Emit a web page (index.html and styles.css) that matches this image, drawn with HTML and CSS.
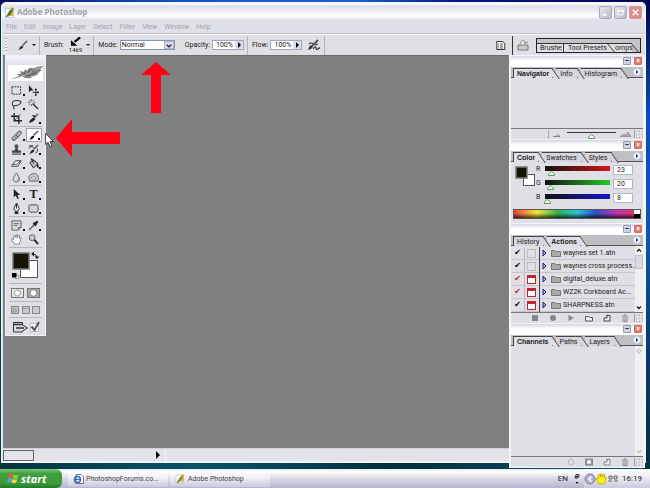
FILE: index.html
```html
<!DOCTYPE html>
<html lang="en">
<head>
  <meta charset="UTF-8" />
  <meta name="viewport" content="width=device-width, initial-scale=1.0" />
  <title>Adobe Photoshop</title>
  <link rel="stylesheet" href="styles.css">
</head>
<body>
  <div class="desktop">
    <main class="window">
      <!-- Title bar -->
      <header class="titlebar">
        <svg class="app-icon" viewBox="0 0 10 11"><rect x="0.5" y="1.5" width="8" height="9" fill="#fff" stroke="#9db4d6" stroke-width=".6"/><path d="M1 10 Q3 4 8 0 Q10 3 7 7 Q5 10 1 10" fill="#b4a52c"/><path d="M3 9 Q4 4 8 1 L6 7Z" fill="#3c7a35"/><path d="M5 9 L9 5 L8 9Z" fill="#e9b230"/><path d="M1 10 L6 4" stroke="#2c5068" stroke-width=".7"/></svg>
        <h1>Adobe Photoshop</h1>
        <div class="caption-buttons">
          <button class="caption" aria-label="Minimize"><svg viewBox="0 0 12 12"><path d="M3 8.5h4" stroke="#fff" stroke-width="2"/></svg></button>
          <button class="caption" aria-label="Maximize"><svg viewBox="0 0 12 12"><path d="M3 3.5h6v5H3zM3 4.5h6" fill="none" stroke="#fff"/></svg></button>
          <button class="caption close" aria-label="Close"><svg viewBox="0 0 12 12"><path d="M3 3l6 6M9 3l-6 6" stroke="#fff" stroke-width="1.5"/></svg></button>
        </div>
      </header>

      <nav class="menubar">
        <button>File</button><button>Edit</button><button>Image</button><button>Layer</button><button>Select</button><button>Filter</button><button>View</button><button>Window</button><button>Help</button>
      </nav>

      <!-- Options bar -->
      <div class="options">
        <span class="grip"></span>
        <button class="opt-tool" aria-label="Brush tool">
          <svg class="icon" viewBox="0 0 12 12"><path d="M11 1L6 6" stroke="#666" stroke-width="1.8"/><path d="M1 11Q3 10 3 8Q5 5 7 7Q6 10 1 11" fill="#333"/></svg>
          <i class="caret"></i>
        </button>
        <span class="divider"></span>
        <span class="opt-label">Brush:</span>
        <button class="brush-pick">
          <span class="brush-preview">
            <svg viewBox="0 0 12 9"><path d="M11 0L5 5" stroke="#000" stroke-width="2.4"/><path d="M1 3V9H8Z"/></svg>
            <span>1469</span>
          </span>
          <i class="caret"></i>
        </button>
        <span class="divider"></span>
        <label class="opt-label" for="mode">Mode:</label>
        <span class="select-box">
          <select id="mode"><option>Normal</option><option>Dissolve</option></select>
          <i class="select-arrow"><svg viewBox="0 0 9 8"><path d="M2 3l2.5 2.5L7 3" fill="none" stroke="#222" stroke-width="1.5"/></svg></i>
        </span>
        <label class="opt-label opacity" for="opacity">Opacity:</label>
        <span class="amount"><input id="opacity" value="100%"><button aria-label="Opacity slider"><svg viewBox="0 0 8 8"><path d="M3 1v6l3-3z"/></svg></button></span>
        <span class="divider"></span>
        <label class="opt-label" for="flow">Flow:</label>
        <span class="amount"><input id="flow" value="100%"><button aria-label="Flow slider"><svg viewBox="0 0 8 8"><path d="M3 1v6l3-3z"/></svg></button></span>
        <button class="airbrush" aria-label="Airbrush"><svg viewBox="0 0 14 12"><path d="M11 1L5 7" stroke="#555" stroke-width="2"/><path d="M1 11Q2 7 4 6l2 2Q4 11 1 11" fill="#333"/><path d="M2 5Q4 3 6 5M6 10Q9 6 9 9T13 8.500M8 6l3-1" fill="none" stroke="#333" stroke-width="1.1"/></svg></button>
        <span class="divider"></span>
        <span class="spacer"></span>
        <button class="opt-icon" aria-label="Toggle palettes"><svg viewBox="0 0 10 11"><path d="M.8 1.5h6l2 2v6h-8z" fill="#f5f5f5" stroke="#333"/><path d="M2 4h1M4 4h3M2 6h1M4 6h3M2 8h1M4 8h3" stroke="#333" stroke-width=".8"/></svg></button>
        <span class="divider dark"></span>
        <button class="opt-icon browser" aria-label="File browser"><svg viewBox="0 0 12 12"><path d="M1 6h10v5H1z" fill="#c9c9c9" stroke="#777"/><path d="M4 6Q3 2 6 1L8 3 7 6M8 4l3-1" fill="#eee" stroke="#777" stroke-width=".8"/></svg></button>
        <div class="well">
          <button class="well-tab">Brushe</button><button class="well-tab front">Tool Presets</button><button class="well-tab slant">omps</button>
        </div>
      </div>

      <div class="canvas"></div>

      <footer class="statusbar">
        <span class="zoom-level"></span>
        <button class="status-menu" aria-label="Status menu"><svg viewBox="0 0 6 8"><path d="M1 0v8l4-4z"/></svg></button>
        <span class="status-track"></span>
      </footer>
    </main>

    <!-- Toolbox -->
    <aside class="toolbox">
      <div class="toolbox-bar"></div>
      <div class="feather">
        <svg viewBox="0 0 36 15"><path d="M3 14Q9 12 11 11L9 9 13 9 12 6 16 7 17 4 19 6Q21 2 25 3L25 4Q29 1 35 1L32 5 34 5 29 9 31 9 26 11 22 12 24 13Q17 14 14 11 9 14 3 14" fill="#808080"/><path d="M4 14Q14 12 21 8T33 2" fill="none" stroke="#c8c8c8" stroke-width=".8"/><path d="M16 10l1-3M20 8l2-4M24 7l3-3M18 11l5-1M23 9l5-1" stroke="#555" stroke-width=".8"/></svg>
      </div>
      <div class="tools">
        <button aria-label="Marquee"><svg viewBox="0 0 12 12"><rect x="1" y="2" width="9.5" height="8" fill="none" stroke="#222" stroke-dasharray="2 1"/></svg></button>
        <button class="single" aria-label="Move"><svg viewBox="0 0 12 12"><path d="M1 0v8l2-2h3z" fill="#222"/><path d="M8.500 4.500v7M5 8h7" stroke="#222"/><path d="M7 5.500l1.500-2 1.500 2zM7 10.500l1.500 1.500 1.500-1.500zM10.500 6.500l1.500 1.500-1.500 1.500z"/></svg></button>
        <button aria-label="Lasso"><svg viewBox="0 0 12 12"><path d="M2 7Q0 3 4 2T11 3Q11 6 6 7T2 7Q4 8 3 9T4 11" fill="none" stroke="#333" stroke-width="1.1"/></svg></button>
        <button class="single" aria-label="Magic wand"><svg viewBox="0 0 12 12"><path d="M5 5l6 6" stroke="#333" stroke-width="1.6"/><path d="M4 0v2.500M4 5.500v2M0 4h2.500M1 1l2 2M7 1L5.500 2.500M1 7l1.500-1.500M6 4h2" stroke="#444" stroke-width=".9"/></svg></button>
        <button class="single" aria-label="Crop"><svg viewBox="0 0 12 12"><path d="M3.500 0v8.500H12M0 3.500h8.500V12" fill="none" stroke="#222" stroke-width="1.5"/><path d="M10.500 1L3 9" stroke="#333" stroke-width=".8"/></svg></button>
        <button aria-label="Slice"><svg viewBox="0 0 12 12"><path d="M11 1L6 6" stroke="#777" stroke-width="2"/><path d="M1 11Q2 7 6 5l2 2Q5 10 1 11M8 5L4 3 7 2" fill="#222"/></svg></button>
      </div>
      <div class="tools">
        <button aria-label="Healing brush"><svg viewBox="0 0 12 12"><path d="M3 9.500L9.500 3" stroke="#555" stroke-width="4.500" stroke-linecap="round"/><path d="M3 9.500L9.500 3" stroke="#b5b5b5" stroke-width="2.800" stroke-linecap="round"/><path d="M5 5l3 3M4.500 8h.5M7 4.500h.5" stroke="#444"/></svg></button>
        <button class="selected" aria-label="Brush"><svg viewBox="0 0 12 12"><path d="M11 1L6 6" stroke="#555" stroke-width="1.600"/><path d="M1 11Q3 10 3 8Q5 5 7 7Q6 10 1 11" fill="#111"/></svg></button>
        <button aria-label="Clone stamp"><svg viewBox="0 0 12 12"><circle cx="6" cy="2.500" r="2.200" fill="#555"/><path d="M5 4h2l1 3h3v2.500H1V7h3z" fill="#444"/><path d="M1 11h10" stroke="#222"/></svg></button>
        <button aria-label="History brush"><svg viewBox="0 0 12 12"><path d="M11 1L6 6" stroke="#555" stroke-width="1.600"/><path d="M1 11Q3 10 3 8Q5 5 7 7Q6 10 1 11" fill="#222"/><path d="M1 2h5M1 5Q3 1 6 4M8 10Q12 8 10 5" fill="none" stroke="#333"/></svg></button>
        <button aria-label="Eraser"><svg viewBox="0 0 12 12"><path d="M1 8l4-5h6L7.500 9H1z" fill="#f4f4f4" stroke="#333"/><path d="M1.500 7h5L10 3" fill="none" stroke="#333" stroke-width=".8"/></svg></button>
        <button aria-label="Paint bucket"><svg viewBox="0 0 12 12"><path d="M2 5l4-3 5 4-5 5z" fill="#bbb" stroke="#222"/><path d="M3 1q3-1 3 5M10 6q2 2 1 5-2-2-1-5" fill="#222" stroke="#222" stroke-width=".6"/></svg></button>
        <button aria-label="Blur"><svg viewBox="0 0 12 12"><path d="M6 1Q2 6 2.500 8.500 3.500 11 6 11T9.500 8.500Q9.500 6 6 1" fill="#ddd" stroke="#555" stroke-width=".9"/><path d="M8 6q1 3-2 4" fill="none" stroke="#888"/></svg></button>
        <button aria-label="Sponge"><svg viewBox="0 0 12 12"><path d="M1 8Q0 3 5 2t6 3 0 5H2z" fill="#ccc" stroke="#666"/><path d="M3 8q0-3 3-3t2 3q-2 1-3-1" fill="#eee" stroke="#777" stroke-width=".8"/></svg></button>
      </div>
      <div class="tools">
        <button aria-label="Path selection"><svg viewBox="0 0 12 12"><path d="M3 0v9l2.200-2L7 11l1.500-.7L7 6.500h3z" fill="#222"/></svg></button>
        <button aria-label="Type"><span class="type-glyph">T</span></button>
        <button aria-label="Pen"><svg viewBox="0 0 12 12"><path d="M6 0L3 6l1.500 3h3L9 6z" fill="#eee" stroke="#222"/><path d="M6 1v5" stroke="#222"/><path d="M4 9.500h4V12H4z" fill="#222"/></svg></button>
        <button aria-label="Shape"><svg viewBox="0 0 12 12"><rect x="1" y="2" width="10" height="8" rx="2" fill="#d5d5d5" stroke="#444"/></svg></button>
      </div>
      <div class="tools">
        <button aria-label="Notes"><svg viewBox="0 0 12 12"><path d="M1 1h10v7l-3 3H1z" fill="#ddd" stroke="#555"/><path d="M3 4h6M3 6h4M8 11V8h3" fill="none" stroke="#555" stroke-width=".9"/></svg></button>
        <button aria-label="Eyedropper"><svg viewBox="0 0 12 12"><path d="M7.500 4.500L2 10 1 11" stroke="#666" stroke-width="1.600"/><path d="M6 3l3 3M8 4l2.500-2.500" stroke="#222" stroke-width="2.600"/></svg></button>
        <button class="single" aria-label="Hand"><svg viewBox="0 0 12 12"><path d="M4 11L1 7 1 5l2 1V2l1.500-.5L5.500 4V1H7v3l1-2.500 1.500.5L9 5l1.500-1 .5 1-2 6z" fill="#fff" stroke="#666" stroke-width=".8"/></svg></button>
        <button class="single" aria-label="Zoom"><svg viewBox="0 0 12 12"><circle cx="4.500" cy="4" r="3.200" fill="#ccc" stroke="#555"/><path d="M7 6.500l4 4.500" stroke="#222" stroke-width="2"/></svg></button>
      </div>
      <div class="colors">
        <svg viewBox="0 0 34 30"><rect x="11.500" y="9.500" width="17" height="17" fill="#fff" stroke="#555"/><rect x="4" y="2" width="16" height="16" fill="#161405" stroke="#777" stroke-width="1.500"/><rect x="6.500" y="24.500" width="3" height="3" fill="#fff" stroke="#888" stroke-width=".8"/><rect x="3" y="22" width="4.500" height="4.500"/><path d="M24 3q4 0 4 4" fill="none" stroke="#222"/><path d="M25 .5v5L22 3zM25.500 5.500h5L28 8z" fill="#222"/></svg>
      </div>
      <div class="modes">
        <button aria-label="Standard mode"><svg viewBox="0 0 13 10"><rect x=".5" y=".5" width="12" height="9" fill="#e4e4e4" stroke="#777"/><circle cx="6.500" cy="5" r="3" fill="#fff" stroke="#888" stroke-width=".8"/></svg></button>
        <button aria-label="Quick mask"><svg viewBox="0 0 13 10"><rect x=".5" y=".5" width="12" height="9" fill="#a8a8a8" stroke="#777"/><circle cx="6.500" cy="5" r="3.300" fill="#fff" stroke="#777" stroke-width=".8"/></svg></button>
      </div>
      <div class="modes screens">
        <button aria-label="Standard screen"><svg viewBox="0 0 8 8"><rect x=".5" y=".5" width="7" height="7" fill="#c4c4c4" stroke="#888"/><path d="M2 3h3v3H2z" fill="none" stroke="#888" stroke-width=".8"/></svg></button>
        <button aria-label="Full screen with menu"><svg viewBox="0 0 8 8"><rect x=".5" y=".5" width="7" height="7" fill="#ccc" stroke="#888"/><path d="M1 2.500h6" stroke="#999"/></svg></button>
        <button aria-label="Full screen"><svg viewBox="0 0 8 8"><rect x=".5" y=".5" width="7" height="7" fill="#ccc" stroke="#888"/></svg></button>
      </div>
      <div class="modes jump">
        <button aria-label="Jump to ImageReady"><svg viewBox="0 0 28 12"><path d="M1.500 1.500h9V4l5 3-5 3v1h-9z" fill="#ddd" stroke="#333"/><path d="M1 3.500h9M4 7h8" stroke="#333" stroke-width="1.400"/><rect x="18.500" y="2.500" width="8" height="8" fill="#fff" stroke="#bbb"/><path d="M19.500 5.500l3 3.500L27 1" fill="none" stroke="#555" stroke-width="2"/></svg></button>
      </div>
    </aside>

    <!-- Palettes -->
    <aside class="palettes">
      <section class="palette navigator">
        <div class="palette-bar"><button class="mini" aria-label="Minimize">–</button><button class="mini close" aria-label="Close">×</button></div>
        <div class="tabs">
          <button class="tab active">Navigator</button><button class="tab">Info</button><button class="tab">Histogram</button>
          <button class="flyout" aria-label="Palette menu"></button>
        </div>
        <div class="palette-body"></div>
        <div class="palette-foot nav-foot">
          <span class="nav-percent"></span>
          <svg class="hill" viewBox="0 0 8 5"><path d="M0 4.500h7L5 2.500 3.500 4" fill="none" stroke="#888"/></svg>
          <input class="nav-slider" type="range" value="50" aria-label="Zoom">
          <svg class="hill big" viewBox="0 0 12 6"><path d="M0 5.500L4 3l2 1 2-3 3 4.500z" fill="#aaa" stroke="#888" stroke-width=".7"/></svg>
          <span class="resize"></span>
        </div>
      </section>

      <section class="palette color">
        <div class="palette-bar"><button class="mini" aria-label="Minimize">–</button><button class="mini close" aria-label="Close">×</button></div>
        <div class="tabs">
          <button class="tab active">Color</button><button class="tab">Swatches</button><button class="tab">Styles</button>
          <button class="flyout" aria-label="Palette menu"></button>
        </div>
        <div class="color-body">
          <svg class="swatch" viewBox="0 0 20 20"><rect x="8.500" y="8.500" width="11" height="11" fill="#fff" stroke="#555"/><rect x="1" y="1" width="11" height="11" fill="#161405" stroke="#777" stroke-width="1.500"/></svg>
          <div class="channels">
            <label for="red">R</label><input id="red" class="channel red" type="range" max="255" value="23"><input class="value" value="23" aria-label="Red value">
            <label for="green">G</label><input id="green" class="channel green" type="range" max="255" value="20"><input class="value" value="20" aria-label="Green value">
            <label for="blue">B</label><input id="blue" class="channel blue" type="range" max="255" value="8"><input class="value" value="8" aria-label="Blue value">
          </div>
        </div>
        <div class="ramp"><span class="ramp-ends"></span></div>
      </section>

      <section class="palette actions">
        <div class="palette-bar"><button class="mini" aria-label="Minimize">–</button><button class="mini close" aria-label="Close">×</button></div>
        <div class="tabs">
          <button class="tab">History</button><button class="tab active">Actions</button>
          <button class="flyout" aria-label="Palette menu"></button>
        </div>
        <div class="actions-body">
          <ul class="action-list">
            <li><input type="checkbox" id="a1" checked><span class="dialog"></span><i class="expand"></i><i class="folder"></i><label for="a1">waynes set 1.atn</label></li>
            <li><input type="checkbox" id="a2" checked><span class="dialog"></span><i class="expand"></i><i class="folder"></i><label for="a2">waynes cross process...</label></li>
            <li class="partial"><input type="checkbox" id="a3" checked><span class="dialog"></span><i class="expand"></i><i class="folder"></i><label for="a3">digital_deluxe.atn</label></li>
            <li class="partial"><input type="checkbox" id="a4" checked><span class="dialog"></span><i class="expand"></i><i class="folder"></i><label for="a4">WZ2K Corkboard Ac...</label></li>
            <li class="mixed"><input type="checkbox" id="a5" checked><span class="dialog"></span><i class="expand"></i><i class="folder"></i><label for="a5">SHARPNESS.atn</label></li>
          </ul>
          <div class="scroll">
            <svg viewBox="0 0 8 8"><path d="M2 5l2-2 2 2" fill="none" stroke="#222" stroke-width="1.400"/></svg>
            <span class="thumb"></span>
            <svg class="down" viewBox="0 0 8 8"><path d="M2 3l2 2 2-2" fill="none" stroke="#222" stroke-width="1.400"/></svg>
          </div>
        </div>
        <div class="palette-foot icons">
          <svg viewBox="0 0 8 8"><rect x="1" y="1" width="6" height="6" fill="#888"/></svg>
          <svg viewBox="0 0 8 8"><circle cx="4" cy="4" r="3" fill="#888"/></svg>
          <svg viewBox="0 0 8 8"><path d="M1.500 1v6L7 4z" fill="#888"/></svg>
          <svg viewBox="0 0 8 8"><path d="M.5 2.500h3l1 1h3v3.500h-7z" fill="#eee" stroke="#555"/></svg>
          <svg viewBox="0 0 8 8"><path d="M3 1.500h4v5.500H1V4h3V2" fill="#eee" stroke="#444"/></svg>
          <svg viewBox="0 0 8 8"><path d="M1 2h6M3 1h2M2 3v4.500h4V3M4 3v4" fill="none" stroke="#888"/></svg>
          <span class="resize"></span>
        </div>
      </section>

      <section class="palette channels-palette">
        <div class="palette-bar"><button class="mini" aria-label="Minimize">–</button><button class="mini close" aria-label="Close">×</button></div>
        <div class="tabs">
          <button class="tab active">Channels</button><button class="tab">Paths</button><button class="tab">Layers</button>
          <button class="flyout" aria-label="Palette menu"></button>
        </div>
        <div class="palette-body">
          <div class="scroll disabled">
            <svg viewBox="0 0 8 8"><path d="M1.500 4.500L4 2l2.500 2.500H5v2H3v-2z" fill="none" stroke="#c4c3b8"/></svg>
            <svg class="down" viewBox="0 0 8 8"><path d="M2 3l2 2 2-2" fill="none" stroke="#c4c3b8" stroke-width="1.400"/></svg>
          </div>
        </div>
        <div class="palette-foot icons">
          <svg viewBox="0 0 8 8"><circle cx="4" cy="4" r="2.800" fill="none" stroke="#bbb"/></svg>
          <svg viewBox="0 0 8 8"><rect x=".5" y="1" width="7" height="6" fill="#999" stroke="#888"/><circle cx="4" cy="4" r="2" fill="#fff"/></svg>
          <svg viewBox="0 0 8 8"><path d="M3 1.500h4v5.500H1V4h3V2" fill="#eee" stroke="#888"/></svg>
          <svg viewBox="0 0 8 8"><path d="M1 2h6M3 1h2M2 3v4.500h4V3M4 3v4" fill="none" stroke="#888"/></svg>
          <span class="resize"></span>
        </div>
      </section>
    </aside>

    <!-- Pointers drawn over the workspace -->
    <svg class="arrow-up" viewBox="0 0 30 51"><path d="M15 0L30 13H20V51H10V13H0Z" fill="#ff0014"/></svg>
    <svg class="arrow-left" viewBox="0 0 64 38"><path d="M0 19L16 0V13H64V25H16V38Z" fill="#ff0014"/></svg>
    <svg class="cursor" viewBox="0 0 9 15"><path d="M.5.5v11L3 9.200l2 4.800 2-.9-2-4.600h3.500z" fill="#fff" stroke="#222" stroke-width=".8"/></svg>
  </div>

  <!-- Taskbar -->
  <footer class="taskbar">
    <button class="start">
      <svg viewBox="0 0 12 11"><path d="M2 1Q4 0 6 1.500L5 5Q3 4 1 4.500z" fill="#f0562a"/><path d="M6.500 1.500Q9 3 11.500 1.500L10.500 5Q8 6 5.800 5z" fill="#8fd43c"/><path d="M1 5.500Q3 4.500 5 6L4 9.500Q2 8.500 0 9z" fill="#5b9bf0"/><path d="M5.500 6Q8 7 10.300 6L9.300 9.500Q7 10.500 4.600 9.500z" fill="#ffd23c"/></svg>
      start
    </button>
    <button class="task">
      <svg viewBox="0 0 11 10"><path d="M3 .5h5l2.500 2.500v6.500H3z" fill="#fff" stroke="#555" stroke-width=".8"/><circle cx="4.500" cy="5.500" r="3" fill="none" stroke="#2a6fd0" stroke-width="1.600"/><path d="M2 5.500h5" stroke="#2a6fd0" stroke-width="1.300"/></svg>
      PhotoshopForums.co...
    </button>
    <button class="task">
      <svg viewBox="0 0 11 10"><path d="M1 1h7v8H1z" fill="#fff" stroke="#9db4d6" stroke-width=".6"/><path d="M2 9Q3 4 8 0 10 3 7 6 5 9 2 9" fill="#b4a52c"/><path d="M5 8l4-4 0 3z" fill="#e9b230"/><path d="M2 9l5-6" stroke="#2c5068" stroke-width=".8"/></svg>
      Adobe Photoshop
    </button>
    <span class="spacer"></span>
    <span class="lang">EN</span>
    <svg class="lang-icon" viewBox="0 0 6 12"><path d="M2 1.500h3v2H2zM1 3.500h3v1.500H1z" fill="none" stroke="#222" stroke-width=".9"/><path d="M1.500 9h3L3 11z"/></svg>
    <div class="tray">
      <svg class="tray-chevron" viewBox="0 0 12 12"><circle cx="6" cy="6" r="5" fill="#b4b7cb" stroke="#77798c"/><path d="M7.500 3.500L5 6l2.500 2.500" fill="none" stroke="#fff" stroke-width="1.400"/></svg>
      <svg class="tray-hand" viewBox="0 0 11 12"><path d="M3 11L0 6l1-1 1 1V2l1.500-.5L4.500 4V1H6v3l1.500-3L9 2 8 5l2-1 .5 1L8.500 11z" fill="#ffee10" stroke="#a09000" stroke-width=".6"/></svg>
      <svg class="tray-faces" viewBox="0 0 10 8"><path d="M1 1h3v3H1zM6 1h3v3H6zM0 6h4M6 6h4" fill="#ddd" stroke="#555" stroke-width=".9"/></svg>
      <time>16:19</time>
    </div>
  </footer>
</body>
</html>
```
FILE: styles.css
```css
* {
  box-sizing: border-box;
}
body {
  margin: 0;
  height: 100vh;
  display: flex;
  flex-direction: column;
  overflow: hidden;
  font-family: Roboto, "Noto Sans", sans-serif;
  font-size: 7px;
  line-height: 10px;
  color: #222;
}
button, input, select {
  font: inherit;
  color: inherit;
  margin: 0;
  padding: 0;
  border: 0;
  background: none;
  border-radius: 0;
}
svg {
  display: block;
  flex: none;
}
.spacer {
  flex: 1;
}

/* Desktop and main window */
.desktop {
  flex: 1;
  min-height: 0;
  position: relative;
  display: flex;
  padding: 2px 4px 6px 1px;
  background:
    linear-gradient(90deg, #020a60, #0a2f9c 12%, #1258c8 30%, #1a60d0 55%, #06178a 70%, #020350) top / 100% 4px no-repeat,
    linear-gradient(#020350, #0a4fb5 25%, #0b57b5 50%, #063a70 75%, #03303f) right / 8px 100% no-repeat,
    linear-gradient(90deg, #05333f, #06566a 30%, #04303f 60%, #0a5568);
}
.window {
  flex: 1;
  display: flex;
  flex-direction: column;
  background: #e0dfe6;
  border: 1px solid #f6f6fa;
  border-bottom-width: 2px;
  border-radius: 5px 5px 0 0;
}
.titlebar {
  display: flex;
  align-items: center;
  height: 17px;
  padding: 1px 3px 0 3px;
  border-radius: 5px 5px 0 0;
  background: linear-gradient(#fff, #dedee8 20%, #f2f2f7 55%, #fff 75%, #dfdfe8);
}
.app-icon {
  width: 10px;
  height: 11px;
}
.titlebar h1 {
  margin: 0 0 0 2px;
  font: bold 8px/12px "Noto Sans", sans-serif;
  color: #a2a2a8;
}
.caption-buttons {
  display: flex;
  gap: 2px;
  margin-left: auto;
}
.caption {
  width: 13px;
  height: 13px;
  border: 1px solid #a9aab8;
  border-radius: 2px;
  background: linear-gradient(135deg, #e4e4ec, #b9bac8);
}
.caption.close {
  border-color: #cf9ea0;
  background: #dd8d8d;
}
.menubar {
  display: flex;
  gap: 7px;
  height: 14px;
  padding: 0 4px;
  border-bottom: 1px solid #c4c4ce;
  background: #dfe0e8;
  color: #a5a5a9;
}

/* Options bar */
.options {
  display: flex;
  align-items: center;
  height: 21px;
  padding: 0 4px 0 3px;
  border-top: 1px solid #f8f8fa;
  background: #e0dfe4;
  white-space: nowrap;
}
.grip {
  width: 2px;
  height: 15px;
  background: repeating-linear-gradient(#b0b0b6 0 1px, #f2f2f2 1px 3px);
}
.opt-tool {
  display: flex;
  align-items: center;
  gap: 4px;
  margin-left: 10px;
}
.icon {
  width: 11px;
  height: 11px;
}
.caret {
  width: 0;
  border: 2px solid transparent;
  border-top-color: #111;
  border-bottom: 0;
}
.divider {
  width: 1px;
  height: 19px;
  margin: 0 4px 0 3px;
  background: #b4b4bb;
}
.opt-label {
  margin-right: 2px;
}
.brush-pick {
  display: flex;
  align-items: center;
  gap: 4px;
  margin-left: 3px;
}
.brush-preview {
  display: flex;
  flex-direction: column;
  align-items: center;
  font-size: 6px;
  line-height: 7px;
}
.brush-preview svg {
  width: 11px;
  height: 9px;
}
.select-box {
  display: flex;
  width: 55px;
  height: 10px;
  border: 1px solid #8595b0;
  background: #fff;
}
.select-box select {
  appearance: none;
  flex: 1;
  min-width: 0;
  padding-left: 1px;
  line-height: 8px;
}
.select-arrow {
  width: 10px;
  border: 1px solid #b0b6d0;
  background: #d4d8ea;
}
.opacity {
  margin-left: 10px;
}
.amount {
  display: flex;
  width: 32px;
  height: 10px;
  border: 1px solid #a3a9bd;
  background: #fff;
}
.amount input {
  flex: 1;
  min-width: 0;
  padding-left: 3px;
}
.amount button {
  width: 8px;
  background: #dadde8;
}
.airbrush {
  width: 14px;
  height: 12px;
  margin-left: 5px;
}
.opt-icon {
  width: 10px;
  height: 11px;
}
.opt-icon.browser {
  width: 12px;
  height: 12px;
  margin: 0 7px 0 0;
}
.divider.dark {
  margin-left: 6px;
  background: #333;
}
.well {
  display: flex;
  width: 105px;
  height: 15px;
  padding-top: 4px;
  border: 1px solid #222;
  background: #c4c4c6;
}
.well-tab {
  position: relative;
  flex: none;
  width: 26px;
  padding-left: 3px;
  border-top: 1px solid #333;
  background: #e0dfe4;
  line-height: 9px;
  text-align: left;
}
.well-tab.front {
  width: 49px;
  padding-left: 4px;
  border-left: 1px solid #333;
}
.well-tab.slant {
  width: 20px;
  padding-left: 3px;
}
.well-tab.slant::before,
.well-tab.slant::after {
  content: "";
  position: absolute;
  top: 0;
  left: -1px;
  width: 1px;
  height: 9px;
  background: #333;
  transform: skewX(40deg);
}
.well-tab.slant::after {
  left: 23px;
}
.canvas {
  flex: 1;
  margin-left: 1px;
  border-top: 1px solid #6c6c6c;
  background: #808080;
}
.statusbar {
  display: flex;
  align-items: center;
  height: 13px;
  border-top: 1px solid #d2d2d6;
  background: #e3e3e8;
}
.zoom-level {
  width: 31px;
  height: 11px;
  margin-left: 1px;
  border: 1px solid #666;
}
.status-menu {
  width: 6px;
  height: 8px;
  margin-left: 121px;
}
.status-track {
  flex: 1;
  height: 11px;
  margin-left: 4px;
  border-left: 1px solid #f4f4f6;
}

/* Toolbox */
.toolbox {
  position: absolute;
  top: 55px;
  left: 5px;
  width: 41px;
  padding: 0 3px 0;
  border: 1px solid #f2f2f6;
  background: #e0dfe5;
}
.toolbox-bar {
  height: 9px;
  margin: 0 -3px;
  background: linear-gradient(#f6f6fa, #dcdeec);
}
.feather {
  height: 16px;
  margin: 0 -1px 2px;
  background: #fff;
}
.feather svg {
  width: 36px;
  height: 15px;
}
.tools {
  display: grid;
  grid-template-columns: 1fr 1fr;
  grid-auto-rows: 14px;
  padding-bottom: 1px;
  margin-bottom: 1px;
  border-bottom: 1px solid #b6b6bd;
}
.tools button {
  position: relative;
  display: flex;
  align-items: center;
  padding-left: 2px;
}
.tools svg {
  width: 11px;
  height: 11px;
}
.tools button::after {
  content: "";
  position: absolute;
  right: 1px;
  bottom: 1px;
  width: 2px;
  height: 2px;
  background: #111;
}
.tools button.single::after {
  display: none;
}
.tools button.selected {
  background: #fff;
  border: 1px solid #9aa3b5;
  padding-left: 1px;
}
.type-glyph {
  padding-left: 2px;
  font: bold 12px/12px "Liberation Serif", serif;
}
.colors {
  height: 35px;
  padding-top: 2px;
  border-bottom: 1px solid #b6b6bd;
}
.colors svg {
  width: 34px;
  height: 30px;
}
.modes {
  display: flex;
  align-items: center;
  justify-content: space-evenly;
  height: 18px;
  border-bottom: 1px solid #b6b6bd;
}
.modes button {
  width: 13px;
}
.screens {
  height: 16px;
}
.screens button {
  width: 8px;
}
.jump {
  height: 17px;
  border: 0;
}
.jump button {
  width: 28px;
}

/* Palettes */
.palettes {
  position: absolute;
  top: 55px;
  right: 5px;
  bottom: 1px;
  width: 136px;
  display: flex;
  flex-direction: column;
  gap: 1px;
  padding: 1px 2px 1px 2px;
  background: #f5f5f9;
}
.palette {
  display: flex;
  flex-direction: column;
  background: #e0dfe5;
}
.palette-bar {
  display: flex;
  justify-content: flex-end;
  gap: 3px;
  height: 11px;
  padding: 1px;
  background: linear-gradient(#d5d5e2, #fff 40%, #fff);
}
.mini {
  width: 8px;
  height: 8px;
  border: 1px solid #9799b5;
  border-radius: 1px;
  background: #cfd0e2;
  color: #223;
  font-weight: bold;
  line-height: 6px;
}
.mini.close {
  border-color: #d8695f;
  background: #e27a72;
  color: #fff;
}
.tabs {
  display: flex;
  height: 11px;
  padding: 1px 2px 0;
  border-bottom: 1px solid #555;
  background: #bfbfc3;
}
.tab {
  position: relative;
  height: 10px;
  padding: 0 4px 0 4px;
  margin-right: 4px;
  border-top: 1px solid #444;
  background: #d6d5dc;
  line-height: 8px;
}
.tab:first-child {
  padding-left: 3px;
  border-left: 1px solid #444;
}
.tab::after {
  content: "";
  position: absolute;
  z-index: 1;
  top: -1px;
  right: -4px;
  width: 5px;
  height: 10px;
  border-top: 1px solid #444;
  border-right: 1px solid #444;
  background: inherit;
  transform: skewX(35deg);
}
.tab.active {
  padding-right: 3px;
  background: #e0dfe5;
  font: bold 7px/8px "Liberation Sans", sans-serif;
}
.flyout {
  width: 8px;
  height: 8px;
  margin-left: auto;
  background: url("data:image/svg+xml,%3Csvg xmlns='http://www.w3.org/2000/svg' viewBox='0 0 8 8'%3E%3Ccircle cx='4' cy='4' r='3.500' fill='%23fff' stroke='%23b9cdf0' stroke-width='.8'/%3E%3Cpath d='M3 1.800V6.200L5.500 4Z' fill='%23203c9c'/%3E%3C/svg%3E");
}
.palette-body {
  flex: 1;
  display: flex;
  justify-content: flex-end;
}
.palette-foot {
  display: flex;
  align-items: center;
  height: 11px;
  border-top: 1px solid #777;
}
.resize {
  width: 9px;
  height: 8px;
  border-left: 1px solid #999;
  background: radial-gradient(#aaa 30%, transparent 40%) 0 0 / 3px 3px;
}
.navigator {
  height: 83px;
}
.nav-percent {
  width: 38px;
  height: 9px;
  border-right: 1px solid #aaa;
}
.hill {
  width: 8px;
  height: 5px;
  margin-left: 4px;
}
.hill.big {
  width: 12px;
  height: 6px;
  margin: 0 2px 0 4px;
}
input[type="range"] {
  appearance: none;
  flex: 1;
  min-width: 0;
  height: 9px;
}
input[type="range"]::-webkit-slider-runnable-track {
  height: 9px;
}
input[type="range"]::-webkit-slider-thumb {
  appearance: none;
  width: 7px;
  height: 5px;
  margin-top: 4px;
  background: url("data:image/svg+xml,%3Csvg xmlns='http://www.w3.org/2000/svg' viewBox='0 0 7 5'%3E%3Cpath d='M3.500 .5L6.500 3V4.500H.5V3Z' fill='%23fff' stroke='%23478c47' stroke-width='.9'/%3E%3C/svg%3E");
}
.nav-slider {
  margin-left: 6px;
  background: linear-gradient(#333, #333) 0 2px / 100% 1px no-repeat;
}
.color {
  height: 83px;
}
.color-body {
  flex: 1;
  display: flex;
  padding: 3px 10px 0 4px;
}
.swatch {
  width: 20px;
  height: 20px;
  margin-top: 1px;
}
.channels {
  flex: 1;
  display: grid;
  grid-template-columns: 6px 1fr 20px;
  grid-auto-rows: 14px;
  column-gap: 3px;
  padding-left: 1px;
}
.channels label {
  line-height: 8px;
}
/* the track is inset so that the thumb centre can reach both ends */
.channels .channel {
  margin: 1px -3px 0;
  height: 10px;
  background-position: 3px 0;
  background-size: calc(100% - 6px) 5px;
  background-repeat: no-repeat;
}
.red {
  background-image: linear-gradient(90deg, #111, #d01818);
}
.green {
  background-image: linear-gradient(90deg, #111, #25c825);
}
.blue {
  background-image: linear-gradient(90deg, #111, #1717c8);
}
.value {
  width: 20px;
  height: 10px;
  padding-left: 3px;
  border: 1px solid #b5b8c6;
  background: #fff;
}
.ramp {
  display: flex;
  justify-content: flex-end;
  height: 10px;
  margin: 0 2px 4px;
  border: 1px solid #555;
  background:
    linear-gradient(transparent 40%, rgba(0, 0, 0, 0.7)),
    linear-gradient(90deg, #f03c3c, #f5e63c 18%, #2fb34a 35%, #2ac4dc 50%, #2d4fc8 65%, #c832b4 82%, #f03250);
}
.ramp-ends {
  width: 6px;
  background: linear-gradient(#fff 50%, #000 50%);
}

/* Actions list */
.actions {
  height: 99px;
}
.actions-body {
  flex: 1;
  min-height: 0;
  display: flex;
}
.action-list {
  flex: 1;
  min-width: 0;
  margin: 0;
  padding: 1px 0 0;
  list-style: none;
}
.action-list li {
  display: flex;
  align-items: center;
  height: 13px;
  border-bottom: 1px solid #c6c6cc;
  white-space: nowrap;
}
.action-list li > * {
  flex: none;
}
.action-list input {
  appearance: none;
  width: 14px;
  height: 12px;
  border-right: 1px solid #b8b8be;
  text-align: center;
}
.action-list input:checked::before {
  content: "✔";
  font: 8px/12px "DejaVu Sans", sans-serif;
  color: #000;
}
.action-list .partial input::before {
  color: #c01820;
}
.dialog {
  width: 9px;
  height: 9px;
  margin: 0 3px 0 2px;
  border: 1px solid #bbb;
}
.partial .dialog,
.mixed .dialog {
  border: 1px solid #c0242c;
  border-top-width: 3px;
  background: #fff;
}
.expand {
  width: 12px;
  height: 13px;
  border-left: 1px solid #444;
  background: url("data:image/svg+xml,%3Csvg xmlns='http://www.w3.org/2000/svg' viewBox='0 0 6 12'%3E%3Cpath d='M1 3V9L4 6Z' fill='%23aab' stroke='%2323238c'/%3E%3C/svg%3E") 2px 0 / 6px 12px no-repeat;
}
.folder {
  width: 10px;
  height: 8px;
  margin-right: 2px;
  background: url("data:image/svg+xml,%3Csvg xmlns='http://www.w3.org/2000/svg' viewBox='0 0 10 8'%3E%3Cpath d='M.5 1.500H4L5 2.500H9.500V7.500H.5Z' fill='%23aaa' stroke='%23777'/%3E%3C/svg%3E");
}
.scroll {
  width: 8px;
  display: flex;
  flex-direction: column;
  background: #f0f0f0;
}
.scroll svg {
  width: 8px;
  height: 9px;
}
.scroll .down {
  margin-top: auto;
}
.thumb {
  height: 14px;
  border: 1px solid #bfc1cc;
  background: #d9dae3;
}
.icons {
  justify-content: flex-end;
  gap: 10px;
}
.icons svg {
  width: 8px;
  height: 8px;
}
.icons .resize {
  margin-left: -5px;
}
.channels-palette {
  flex: 1;
}

/* Pointers */
.arrow-up {
  position: absolute;
  left: 141px;
  top: 62px;
  width: 30px;
  height: 51px;
}
.arrow-left {
  position: absolute;
  left: 56px;
  top: 119px;
  width: 64px;
  height: 38px;
}
.cursor {
  position: absolute;
  left: 45px;
  top: 133px;
  width: 9px;
  height: 15px;
}

/* Taskbar */
.taskbar {
  display: flex;
  align-items: center;
  height: 19px;
  background: linear-gradient(#e8e9f2, #fff 15%, #d9dae6 50%, #b3b5cb);
  white-space: nowrap;
}
.start {
  display: flex;
  align-items: center;
  gap: 2px;
  width: 62px;
  height: 19px;
  margin-right: 6px;
  padding-left: 7px;
  border-radius: 0 6px 6px 0;
  background: linear-gradient(#7fc87c, #3f9e3e 25%, #3c9c3a 75%, #25762a);
  color: #fff;
  font: italic bold 11px/14px "Open Sans", sans-serif;
}
.start svg {
  width: 12px;
  height: 11px;
}
.task {
  display: flex;
  align-items: center;
  gap: 2px;
  width: 100px;
  height: 16px;
  margin-right: 2px;
  padding-left: 5px;
  border-radius: 2px;
  background: linear-gradient(#fff, #f0f0f6 40%, #c9cadb);
  color: #444;
}
.task svg {
  width: 11px;
  height: 10px;
}
.lang {
  font-size: 8px;
}
.lang-icon {
  width: 6px;
  height: 12px;
  margin: 0 4px 0 6px;
}
.tray {
  display: flex;
  align-items: center;
  height: 19px;
  padding-right: 8px;
  background: linear-gradient(#fff, #e4e4ee 60%, #c8c9da);
  font-size: 8px;
}
.tray-chevron {
  width: 12px;
  height: 12px;
}
.tray-hand {
  width: 11px;
  height: 12px;
}
.tray-faces {
  width: 10px;
  height: 8px;
  margin: 0 4px 0 1px;
}
```
